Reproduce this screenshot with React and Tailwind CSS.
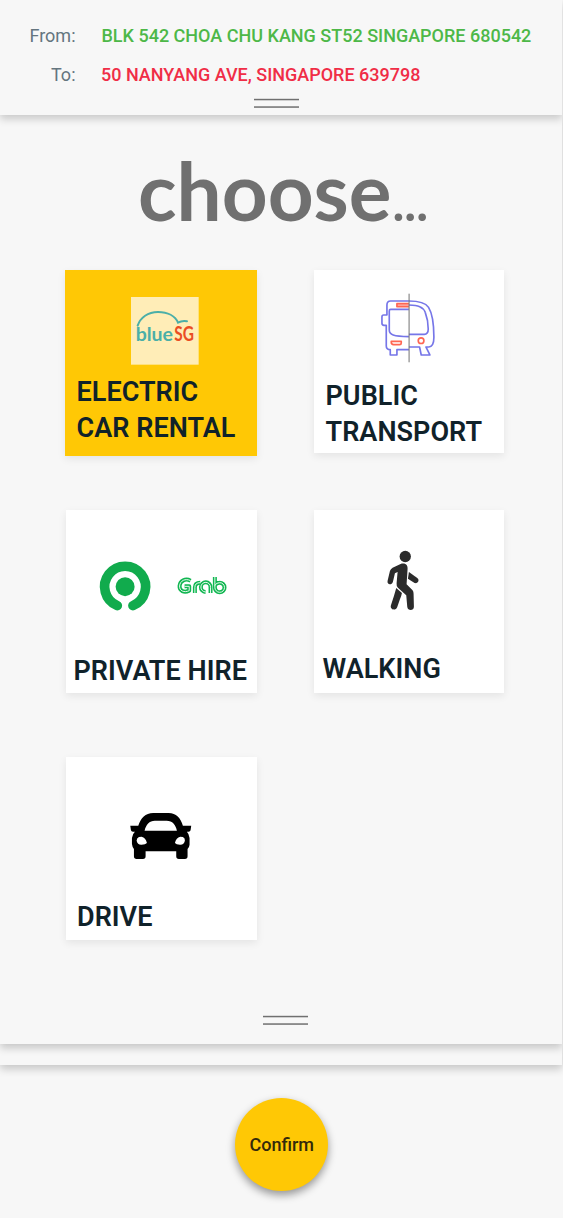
import React from "react";

function Handle({ className = "" }) {
  return (
    <svg viewBox="0 0 45 10" className={`block h-[10px] w-[45px] shrink-0 ${className}`} fill="#707070">
      <rect x="0" y="0.8" width="45" height="1.5" />
      <rect x="0" y="8.3" width="45" height="1.5" />
    </svg>
  );
}

function BlueSgIcon() {
  return (
    <svg viewBox="43 30 576 312" className="block h-[104px] w-[192px] shrink-0" fill="none">
      <rect x="241" y="111" width="203" height="203" fill="#ffedb7" />
      <path d="M261 197C269 172 292 156 322 156C351 156 374 168 382 188C389 184 400 182 409 184" stroke="#4bafa8" strokeWidth="6" strokeLinecap="round" />
      <text x="255" y="242" fontFamily="Lato, sans-serif" fontWeight="700" fontSize="58" fill="#4bafa8" textLength="112" lengthAdjust="spacingAndGlyphs">blue</text>
      <text x="371" y="242" fontFamily="Lato, sans-serif" fontWeight="700" fontSize="61" fill="#ea4d23" textLength="59" lengthAdjust="spacingAndGlyphs">SG</text>
    </svg>
  );
}

function BusIcon() {
  return (
    <svg viewBox="40 30 572 324" className="block h-[108px] w-[190.5px] shrink-0" fill="none" strokeWidth="5" strokeLinejoin="round">
      <g stroke="#7676e8">
        <path d="M325 123H270Q259 123 259 135V165H249Q244 165 244 171V190Q244 196 250 196H257V258Q257 269 269 269V285H289V269H325" />
        <path d="M325 148H270Q266 148 266 153V210C266 224 278 229 325 230" />
        <path d="M325 123C356 123 374 127 384 142C394 158 400 190 400 232C400 250 397 260 385 261H376L388 285H362L357 261H325" />
        <path d="M325 135C352 136 368 140 374 157C379 170 383 188 383 207C383 219 379 223 371 223H325" />
      </g>
      <g stroke="#ff6653">
        <path d="M325 131H289V140H325" fill="#ffb9af" />
        <path d="M272 244H302V249Q302 254 297 254H279Q272 254 272 247Z" />
        <circle cx="361.500" cy="242" r="8.500" />
      </g>
      <path d="M325.500 101V307" stroke="#707070" strokeWidth="3" />
    </svg>
  );
}

function HireIcon() {
  return (
    <svg viewBox="48 30 572 429" className="block h-[143px] w-[190.5px] shrink-0" fill="none">
      <path d="M202 317A61.500 61.500 0 1 1 249 317" stroke="#11ab4d" strokeWidth="29" strokeLinecap="round" />
      <circle cx="225.500" cy="260" r="28.500" fill="#11ab4d" />
      <g strokeLinecap="butt" strokeLinejoin="round">
        <g stroke="#11b651" strokeWidth="12">
          <path d="M422 242C407 234 390 242 389 258C388 273 403 279 418 272V259H404" />
          <path d="M435 279V262Q435 248 451 248" />
          <path d="M482 279V262A14.500 14.500 0 1 0 467 276" />
          <path d="M495 231V262A14.500 14.500 0 1 0 509 248Q498 248 495 257" />
        </g>
        <g stroke="#e9fbef" strokeWidth="3">
          <path d="M422 242C407 234 390 242 389 258C388 273 403 279 418 272V259H404" />
          <path d="M435 279V262Q435 248 451 248" />
          <path d="M482 279V262A14.500 14.500 0 1 0 467 276" />
          <path d="M495 231V262A14.500 14.500 0 1 0 509 248Q498 248 495 257" />
        </g>
      </g>
    </svg>
  );
}

function WalkIcon() {
  return (
    <svg viewBox="40 30 572 423" className="block h-[141px] w-[190.5px] shrink-0">
      <g fill="#2b2b2b">
        <circle cx="314" cy="169.500" r="17" />
        <path d="M300 192C312 188 322 194 321 206L318 253L336 271Q339 275 339 281L340 320C340 333 321 333 320 320L317 286L292 263Q287 258 288 250L291 216L283 220L277 245C273 257 258 254 261 242L268 213Q270 207 276 203Z" />
        <path d="M287 264L304 279Q302 290 298 298L290 321C285 334 267 329 271 316L280 288Z" />
        <path d="M325 216L350 234C358 240 352 252 342 249L322 236Z" />
      </g>
    </svg>
  );
}

function CarIcon() {
  return (
    <svg viewBox="48 37 572 423" className="block h-[141px] w-[190.5px] shrink-0">
      <path fillRule="evenodd" d="M241 243H265C273 220 286 205 310 205H356C379 205 392 220 399 243H424L422 257Q421 261 416 261H411Q418 268 419 280V300Q418 309 413 313V335Q413 343 405 343H387Q379 343 379 335V320H287V335Q287 343 279 343H260Q252 343 252 335V313Q247 307 246 298V280Q247 268 255 261H249Q244 261 243 257ZM284 258H381C377 240 368 228 350 228H315C298 228 288 240 284 258ZM267 277Q260 280 260 288Q263 301 275 300Q287 300 291 295Q287 278 275 276ZM399 277Q406 280 405 288Q402 301 390 300Q379 300 375 295Q379 278 391 276Z" fill="#000" />
    </svg>
  );
}

function Card({ icon, children, className = "", titleClass = "pl-[12px]" }) {
  return (
    <button className={`flex flex-col items-start justify-start text-left shadow-[0_3px_8px_rgba(0,0,0,0.08)] ${className}`}>
      {icon}
      <span className={`block whitespace-nowrap text-[27px] leading-[36px] font-semibold tracking-[0.04px] text-[#10222a] ${titleClass}`}>{children}</span>
    </button>
  );
}

export default function App() {
  return (
    <div className="flex h-[1218px] w-[563px] flex-col overflow-hidden bg-[#f7f7f7] font-['Roboto',sans-serif]">
      <header className="relative z-30 flex h-[115px] w-[562px] shrink-0 flex-col bg-[#f7f7f7] text-[18px] leading-[39px] shadow-[0_4px_8px_rgba(0,0,0,0.19)]">
        <div className="mt-[16px] flex">
          <span className="w-[75.500px] text-right text-[#64757f]">From:</span>
          <span className="ml-[26px] font-medium whitespace-nowrap text-[#4db848]">BLK 542 CHOA CHU KANG ST52 SINGAPORE 680542</span>
        </div>
        <div className="flex">
          <span className="w-[75.500px] text-right text-[#64757f]">To:</span>
          <span className="ml-[25.500px] font-medium whitespace-nowrap text-[#f02d46]">50 NANYANG AVE, SINGAPORE 639798</span>
        </div>
        <Handle className="mt-[4px] ml-[254px]" />
      </header>

      <main className="relative z-20 flex h-[929px] w-[562px] shrink-0 flex-col bg-[#f7f7f7] shadow-[0_4px_8px_rgba(0,0,0,0.2)]">
        <h1 className="mt-[27px] ml-[138px] h-[128px] font-['Lato',sans-serif] text-[80px] leading-[96px] font-bold whitespace-nowrap text-[#707070]">
          choose<span className="ml-[1px] text-[50px] leading-none">...</span>
        </h1>
        <div className="ml-[64.500px] grid grid-cols-[192px_190.500px] grid-rows-[240px_247px_183px] items-start justify-items-end gap-x-[57px]">
          <Card icon={<BlueSgIcon />} className="h-[186px] w-[192px] bg-[#ffc805]">
            ELECTRIC<br />CAR RENTAL
          </Card>
          <Card icon={<BusIcon />} className="h-[183px] w-[190.500px] bg-white">
            PUBLIC<br />TRANSPORT
          </Card>
          <Card icon={<HireIcon />} className="h-[183px] w-[190.500px] bg-white" titleClass="pl-[7.500px]">
            PRIVATE HIRE
          </Card>
          <Card icon={<WalkIcon />} className="h-[183px] w-[190.500px] bg-white" titleClass="pl-[9px]">
            WALKING
          </Card>
          <Card icon={<CarIcon />} className="h-[183px] w-[190.500px] bg-white" titleClass="pt-[1px] pl-[11px]">
            DRIVE
          </Card>
        </div>
        <Handle className="mt-[75px] ml-[263px]" />
      </main>

      <div className="relative z-10 h-[21px] w-[562px] shrink-0 bg-[#f7f7f7] shadow-[0_4px_8px_rgba(0,0,0,0.2)]" />

      <footer className="flex flex-1 items-start justify-center pt-[33px] pl-[0.500px]">
        <button className="flex size-[93px] items-center justify-center rounded-full bg-[#ffc805] text-[18px] font-medium text-[#33290b] shadow-[0_4px_8px_rgba(0,0,0,0.4)]">
          Confirm
        </button>
      </footer>
    </div>
  );
}
